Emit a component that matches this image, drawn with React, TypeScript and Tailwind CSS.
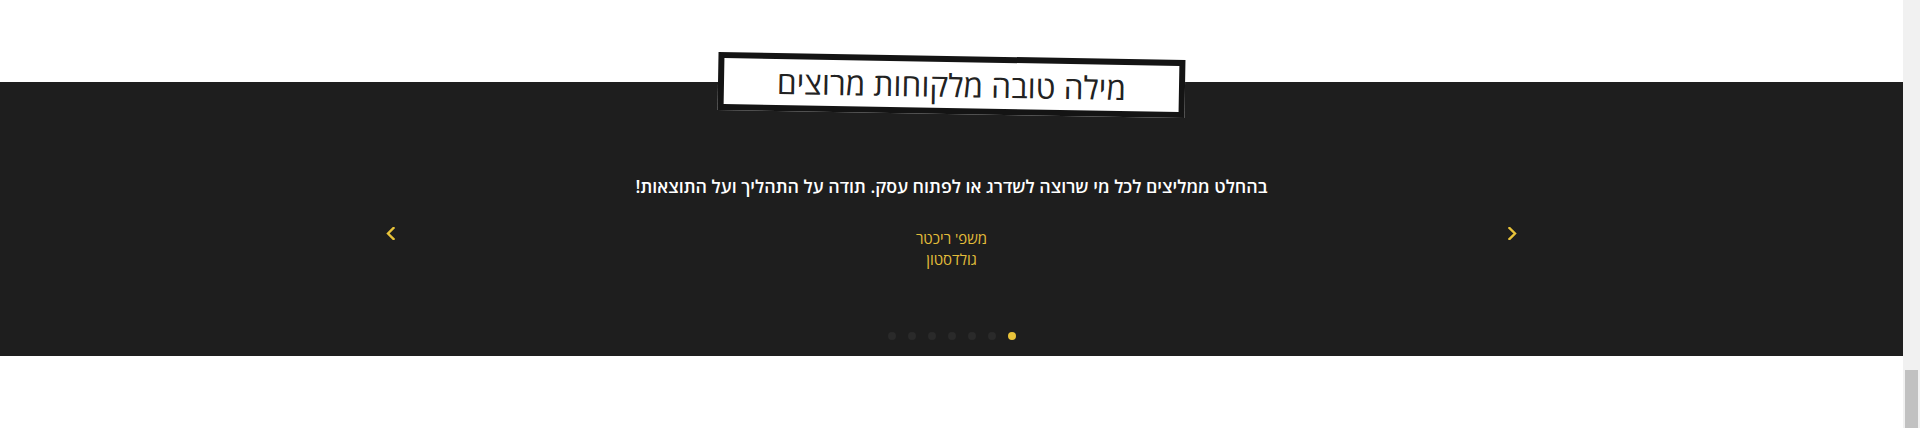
import React from 'react'

const dots = [0, 1, 2, 3, 4, 5, 6]

function Chevron({ dir }: { dir: 'left' | 'right' }) {
  return (
    <svg width="9" height="13" viewBox="0 0 9 13" fill="none">
      <polyline
        points={dir === 'left' ? '7.5,1 2,6.5 7.5,12' : '1.5,1 7,6.5 1.5,12'}
        stroke="#e8c33a"
        strokeWidth="2.4"
        strokeLinecap="square"
        strokeLinejoin="miter"
      />
    </svg>
  )
}

export default function App() {
  return (
    <div className="flex h-[428px] w-full overflow-hidden bg-white font-['Open_Sans','DejaVu_Sans',sans-serif]">
      <div className="flex flex-1 flex-col">
        <div className="h-[82px] bg-white" />

        <section className="flex h-[274px] flex-col items-center bg-[#1e1e1e]">
          {/* title tag */}
          <div className="-mt-[26px] flex h-[58px] w-[467px] rotate-1 items-center justify-center border-[6px] border-[#141414] bg-white">
            <h2 dir="rtl" className="text-[31.6px] font-normal leading-none text-[#222]">
              מילה טובה מלקוחות מרוצים
            </h2>
          </div>

          {/* slider */}
          <div className="mt-[58px] flex w-[1140px] items-start">
            <button className="flex w-[30px] justify-start pl-[4px] pt-[55px]">
              <Chevron dir="left" />
            </button>
            <div className="flex flex-1 flex-col items-center">
              <p dir="rtl" className="text-[17.8px] font-semibold leading-[28px] text-white">
                בהחלט ממליצים לכל מי שרוצה לשדרג או לפתוח עסק. תודה על התהליך ועל התוצאות!
              </p>
              <div dir="rtl" className="mt-[28px] flex flex-col items-center text-[15px] leading-[21px] text-[#e3bd3a]">
                <span>משפ' ריכטר</span>
                <span>גולדסטון</span>
              </div>
            </div>
            <button className="flex w-[30px] justify-end pr-[5px] pt-[55px]">
              <Chevron dir="right" />
            </button>
          </div>

          {/* dots */}
          <div className="mt-[62px] flex gap-[12px]">
            {dots.map((d) => (
              <span
                key={d}
                className={d === 6 ? 'h-[8px] w-[8px] rounded-full bg-[#e8c33a]' : 'h-[8px] w-[8px] rounded-full bg-[#2a2a2a]'}
              />
            ))}
          </div>
        </section>

        <div className="flex-1 bg-white" />
      </div>

      {/* scrollbar */}
      <div className="flex w-[17px] flex-col justify-end bg-[#f1f1f1]">
        <div className="mx-[2px] h-[58px] bg-[#c1c1c1]" />
      </div>
    </div>
  )
}
